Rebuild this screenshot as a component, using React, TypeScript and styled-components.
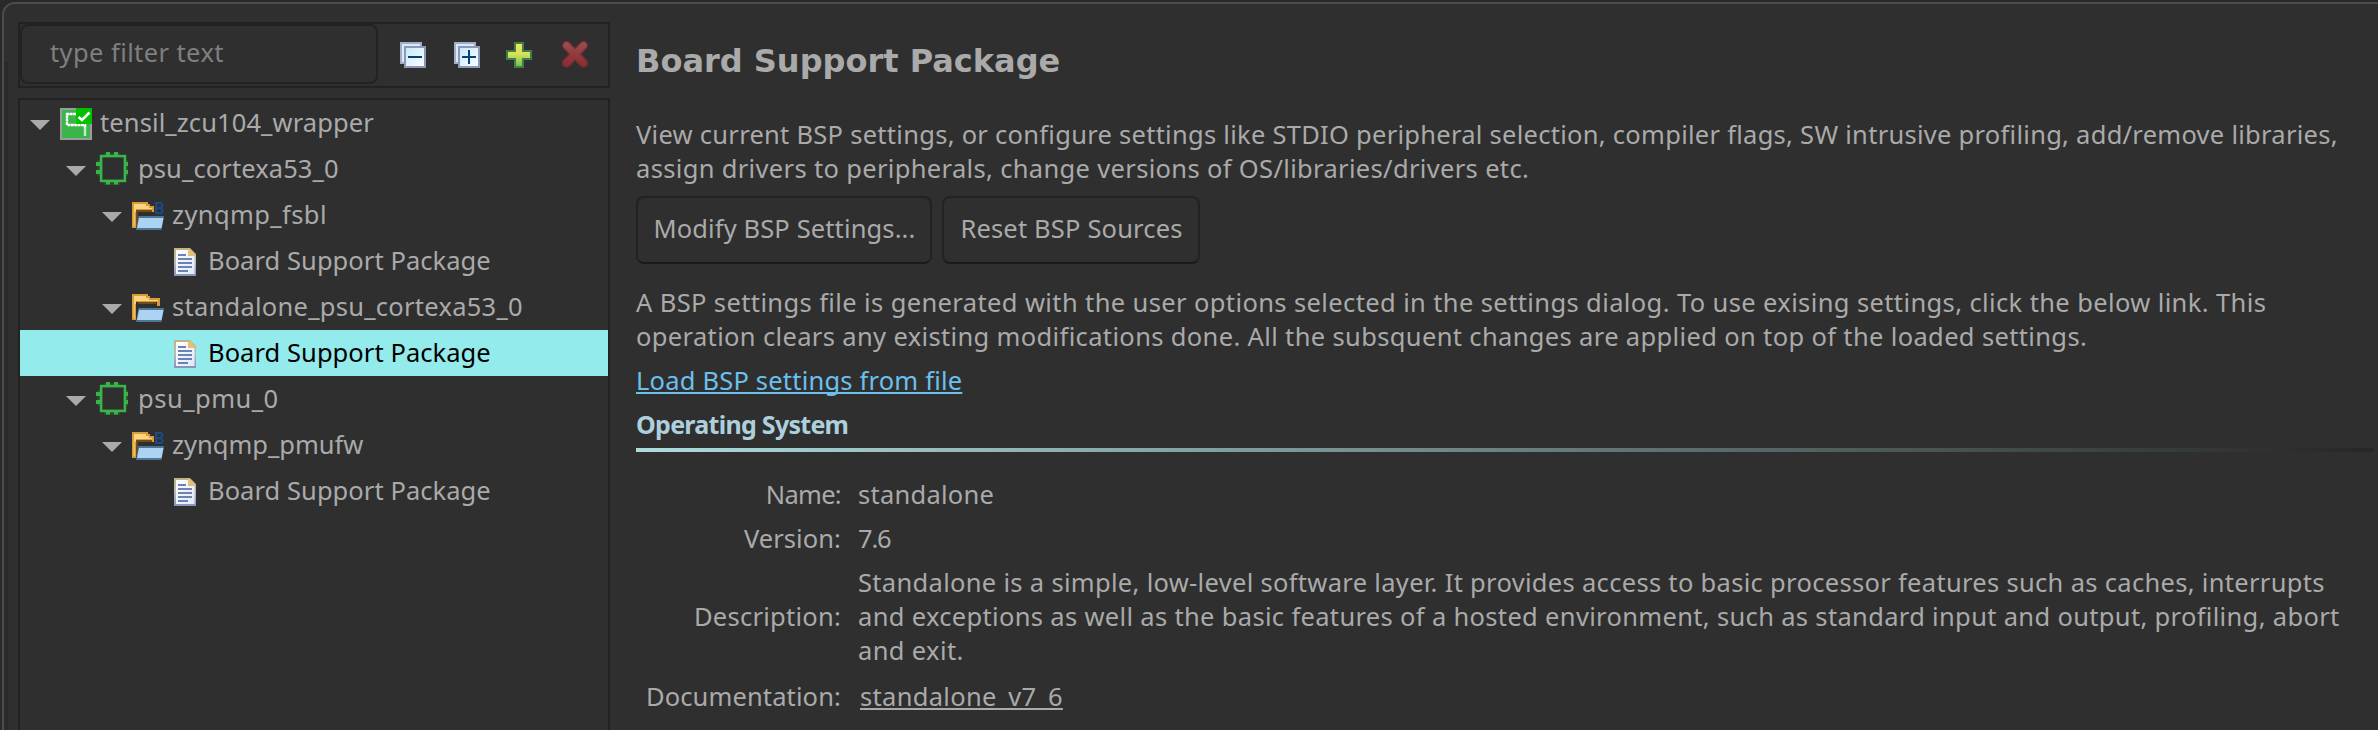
import React from "react";
import styled, { createGlobalStyle, css } from "styled-components";

const GlobalStyle = createGlobalStyle`
  *, *::before, *::after { box-sizing: border-box; }
  html, body { margin: 0; padding: 0; background: #292929; overflow: hidden; }
  body {
    font-family: "Noto Sans", "Open Sans", sans-serif;
    font-size: 25.5px;
    line-height: 34px;
    color: #aaaaaa;
  }
`;

const Frame = styled.div`
  display: flex;
  height: 728px;
  margin: 2px 0 0 2px;
  border-top: 2px solid #4b4b50;
  border-left: 2px solid #4b4b50;
  border-top-left-radius: 13px;
  background: #2f2f2f;
  overflow: hidden;
`;

const Sash = styled.div`
  flex: none;
  width: 4px;
  margin-top: 58px;
  background: #2a2a2a;
`;

const Sidebar = styled.aside`
  display: flex;
  flex-direction: column;
  flex: none;
  width: 592px;
  margin: 18px 0 0 10px;
  gap: 10px;
`;

const Toolbar = styled.div`
  display: flex;
  align-items: flex-start;
  height: 66px;
  border: 2px solid #222222;
`;

const FilterBox = styled.div`
  display: flex;
  align-items: center;
  width: 358px;
  height: 60px;
  padding: 0 0 4px 28px;
  border: 2px solid #222222;
  border-radius: 8px;
  color: #7f7f7f;
  letter-spacing: 0.41px;
`;

const Tools = styled.div`
  display: flex;
  margin: 18px 0 0 22px;
`;

const ToolButton = styled.span<{ $gap: number }>`
  display: flex;
  margin-right: ${(p) => p.$gap}px;
  svg { display: block; overflow: visible; }
`;

const Tree = styled.div`
  flex: 1;
  border: 2px solid #222222;
  border-bottom: 0;
`;

const TreeRow = styled.div<{ $depth: number; $selected?: boolean }>`
  display: flex;
  height: 46px;
  padding-left: ${(p) => 10 + p.$depth * 36}px;
  ${(p) =>
    p.$selected &&
    css`
      background: #94ebeb;
      color: #000000;
    `}
`;

const Twisty = styled.span`
  flex: none;
  width: 20px;
  margin: 20px 10px 0 0;
  svg { display: block; }
`;

const NodeIcon = styled.span<{ $top: number }>`
  flex: none;
  width: 32px;
  margin-top: ${(p) => p.$top}px;
  svg { display: block; overflow: visible; }
`;

const NodeLabel = styled.span<{ $track: number; $pad: number }>`
  padding: 5px 0 0 ${(p) => p.$pad}px;
  letter-spacing: ${(p) => p.$track}px;
  white-space: nowrap;
`;

const Content = styled.main`
  flex: 1;
  padding: 36px 4px 0 0;
  margin-left: 26px;
`;

const Title = styled.h1`
  margin: 0;
  height: 77px;
  font: bold 32px/42px "DejaVu Sans", sans-serif;
`;

const Paragraph = styled.p<{ $gap: number }>`
  margin: 0 0 ${(p) => p.$gap}px;
`;

const Line = styled.span<{ $track: number }>`
  display: block;
  white-space: nowrap;
  letter-spacing: ${(p) => p.$track}px;
`;

const Buttons = styled.div`
  display: flex;
  gap: 10px;
  margin-bottom: 21px;
`;

const Button = styled.button<{ $width: number; $track: number }>`
  width: ${(p) => p.$width}px;
  height: 68px;
  padding: 0 0 5px 1px;
  border: 2px solid #222222;
  border-bottom-color: #1a1a1a;
  border-radius: 8px;
  background: #2f2f2f;
  color: inherit;
  font: inherit;
  letter-spacing: ${(p) => p.$track}px;
  white-space: nowrap;
`;

const LoadLink = styled.a`
  display: block;
  width: fit-content;
  margin-bottom: 10px;
  color: #6cc0ee;
  letter-spacing: 0.2px;
  text-decoration: underline;
  text-decoration-thickness: 2px;
  text-decoration-skip-ink: none;
  text-underline-offset: 2px;
`;

const SectionTitle = styled.h2`
  margin: 0;
  height: 41px;
  font-size: 25px;
  line-height: 34px;
  letter-spacing: -0.72px;
  color: #add0dc;
`;

const Rule = styled.div`
  height: 4px;
  background: linear-gradient(to right, #b0dcdc, #262626);
`;

const Details = styled.dl`
  display: grid;
  grid-template-columns: 205px 1fr;
  column-gap: 17px;
  row-gap: 10px;
  align-items: center;
  margin: 25px 0 0;
`;

const Term = styled.dt<{ $track: number }>`
  text-align: right;
  letter-spacing: ${(p) => p.$track}px;

  &:last-of-type {
    padding-top: 2px;
  }
`;

const Value = styled.dd`
  margin: 0;

  &:last-of-type {
    padding-top: 2px;
  }
`;

const DocLink = styled.a`
  margin-left: 2px;
  letter-spacing: 0.3px;
  text-decoration: underline;
  text-decoration-thickness: 2px;
  text-decoration-skip-ink: none;
  text-underline-offset: 2px;
`;

const Arrow = () => (
  <svg width="20" height="10" viewBox="0 0 20 10">
    <path d="M0 0H20L10 10Z" fill="#aaaaaa" />
  </svg>
);

const BoardIcon = () => (
  <svg width="32" height="32" viewBox="0 0 32 32">
    <rect width="32" height="32" fill="#9c9c9c" />
    <rect x="2" y="2" width="28" height="28" fill="#39b54a" />
    <path d="M16 6H7V17H25V20" fill="none" stroke="#fff" strokeWidth="2.400" strokeDasharray="3 .4" />
    <path d="M25 19V28" stroke="#c4ecca" strokeWidth="2.400" />
    <rect x="16" width="16" height="16" fill="#00c000" />
    <path d="M18.500 9L22 12L29.500 4.500" fill="none" stroke="#fff" strokeWidth="2.600" />
  </svg>
);

const ChipIcon = () => (
  <svg width="33" height="33" viewBox="0 0 33 33">
    <path d="M8 1H24V4H8ZM8 29H24V33H8ZM1 8H4V24H1ZM29 8H32V24H29Z" fill="#2f5e36" opacity=".55" />
    <rect x="6.500" y="5.500" width="21" height="22" fill="none" stroke="#2e5234" strokeWidth="1" />
    <path
      d="M10 0H14V4H10ZM18 0H22V4H18ZM10 28H14V32.500H10ZM18 28H22V32.500H18ZM0 10H4V14H0ZM0 18H4V22H0ZM28 10H32V14H28ZM28 18H32V22H28Z"
      fill="#39b54a"
    />
    <rect x="5" y="4" width="24" height="25" fill="none" stroke="#39b54a" strokeWidth="2.400" />
  </svg>
);

const FolderIcon = ({ bsp }: { bsp?: boolean }) => (
  <svg width="32" height="32" viewBox="0 0 32 32">
    <path
      d={bsp ? "M0 2H16V4H18V6H22V12H4V28H0Z" : "M0 2H16V4H18V6H28V14H25V10H4V28H0Z"}
      fill="#d99c36"
    />
    <path
      d={bsp ? "M2 4H14V6H17V8H20V9H4V12H2Z" : "M2 4H14V6H17V8H26V9H4V12H2Z"}
      fill="#f9d583"
    />
    <path d={bsp ? "M4 10H20V12H6V26H4Z" : "M6 10H24V12H6Z"} fill="#6b4c1c" />
    <path d="M1.500 10H3V26H1.500Z" fill="#f0c266" />
    <path d="M6.500 16H32L29.500 30H4Z" fill="#4d7595" />
    <path d="M7 18H31.500L29.500 28H5Z" fill="#acd4f2" />
    {bsp && (
      <text x="22.500" y="14" fill="#1a4c86" fontFamily="Liberation Sans, sans-serif" fontWeight="bold" fontSize="16" textLength="10" lengthAdjust="spacingAndGlyphs">
        B
      </text>
    )}
  </svg>
);

const DocumentIcon = () => (
  <svg width="32" height="32" viewBox="0 0 32 32">
    <defs>
      <linearGradient id="docEdge" x1="0" y1="0" x2="0" y2="1">
        <stop offset="0" stopColor="#c2b27c" />
        <stop offset=".5" stopColor="#b9bcb8" />
        <stop offset="1" stopColor="#8494b8" />
      </linearGradient>
      <linearGradient id="docFace" x1="0" y1="0" x2="1" y2="1">
        <stop offset="0" stopColor="#ffffff" />
        <stop offset="1" stopColor="#dfe8fa" />
      </linearGradient>
    </defs>
    <path d="M6 2H22L28 8V30H6Z" fill="url(#docEdge)" />
    <path d="M8 4H20V10H26.500V28H8Z" fill="url(#docFace)" />
    <path d="M20 3H22L27 8.500V10H20Z" fill="#e3c078" />
    <path d="M10 8H18V10H10ZM10 12H24V14H10ZM10 16H24V18H10ZM10 20H24V22H10ZM10 24H20V26H10Z" fill="#6c82b4" />
  </svg>
);

const StackIcon = ({ plus }: { plus?: boolean }) => (
  <svg width="26" height="26" viewBox="0 0 26 26">
    <defs>
      <linearGradient id="pane" x1="0" y1="0" x2="1" y2="1">
        <stop offset="0" stopColor="#c4e8fa" />
        <stop offset="1" stopColor="#ffffff" />
      </linearGradient>
    </defs>
    <rect x="1" y="1" width="20" height="20" fill="#d3edfa" stroke="#a3adc6" strokeWidth="2" />
    <rect x="5" y="5" width="20" height="20" fill="url(#pane)" stroke="#8c98b6" strokeWidth="2" />
    <path d={plus ? "M8 14H22V16H8ZM14 8H16V22H14Z" : "M8 14H22V16H8Z"} fill="#04427c" />
  </svg>
);

const AddIcon = () => (
  <svg width="26" height="26" viewBox="0 0 26 26">
    <defs>
      <linearGradient id="add" x1="0" y1="0" x2="0" y2="1">
        <stop offset="0" stopColor="#f2e35a" />
        <stop offset=".45" stopColor="#d8e25a" />
        <stop offset="1" stopColor="#6cc04a" />
      </linearGradient>
    </defs>
    <path d="M9 1H17V9H25V17H17V25H9V17H1V9H9Z" fill="url(#add)" stroke="#3f7d4c" strokeWidth="2" />
  </svg>
);

const RemoveIcon = () => (
  <svg width="26" height="26" viewBox="0 0 26 26">
    <defs>
      <linearGradient id="remove" gradientUnits="userSpaceOnUse" x1="0" y1="0" x2="0" y2="26">
        <stop offset="0" stopColor="#965252" />
        <stop offset=".5" stopColor="#92393c" />
        <stop offset="1" stopColor="#8a2a30" />
      </linearGradient>
    </defs>
    <g fill="none" strokeLinecap="round" strokeLinejoin="round">
      <path d="M4.500 3.500L21.500 21M21.500 3.500L4.500 21" stroke="#7b2c30" strokeWidth="9" />
      <path d="M4.500 3.500L21.500 21M21.500 3.500L4.500 21" stroke="url(#remove)" strokeWidth="6.500" />
    </g>
  </svg>
);

type Kind = "board" | "chip" | "bsp" | "folder" | "doc";

const icons: Record<Kind, { top: number; pad: number; node: React.ReactNode }> = {
  board: { top: 8, pad: 8, node: <BoardIcon /> },
  chip: { top: 6, pad: 10, node: <ChipIcon /> },
  bsp: { top: 8, pad: 8, node: <FolderIcon bsp /> },
  folder: { top: 8, pad: 8, node: <FolderIcon /> },
  doc: { top: 8, pad: 8, node: <DocumentIcon /> },
};

const nodes: { label: string; depth: number; kind: Kind; track: number; selected?: boolean }[] = [
  { label: "tensil_zcu104_wrapper", depth: 0, kind: "board", track: 0.1 },
  { label: "psu_cortexa53_0", depth: 1, kind: "chip", track: 0.1 },
  { label: "zynqmp_fsbl", depth: 2, kind: "bsp", track: 0.4 },
  { label: "Board Support Package", depth: 3, kind: "doc", track: 0.06 },
  { label: "standalone_psu_cortexa53_0", depth: 2, kind: "folder", track: 0.26 },
  { label: "Board Support Package", depth: 3, kind: "doc", track: 0.06, selected: true },
  { label: "psu_pmu_0", depth: 1, kind: "chip", track: 0.5 },
  { label: "zynqmp_pmufw", depth: 2, kind: "bsp", track: 0 },
  { label: "Board Support Package", depth: 3, kind: "doc", track: 0.06 },
];

export default function App() {
  return (
    <>
      <GlobalStyle />
      <Frame>
        <Sash />
        <Sidebar>
          <Toolbar>
            <FilterBox>type filter text</FilterBox>
            <Tools>
              <ToolButton $gap={28}><StackIcon /></ToolButton>
              <ToolButton $gap={26}><StackIcon plus /></ToolButton>
              <ToolButton $gap={30}><AddIcon /></ToolButton>
              <ToolButton $gap={0}><RemoveIcon /></ToolButton>
            </Tools>
          </Toolbar>
          <Tree>
            {nodes.map((n, i) => (
              <TreeRow key={i} $depth={n.depth} $selected={n.selected}>
                <Twisty>{n.kind !== "doc" && <Arrow />}</Twisty>
                <NodeIcon $top={icons[n.kind].top}>{icons[n.kind].node}</NodeIcon>
                <NodeLabel $track={n.track} $pad={icons[n.kind].pad}>{n.label}</NodeLabel>
              </TreeRow>
            ))}
          </Tree>
        </Sidebar>
        <Content>
          <Title>Board Support Package</Title>
          <Paragraph $gap={11}>
            <Line $track={0.272}>View current BSP settings, or configure settings like STDIO peripheral selection, compiler flags, SW intrusive profiling, add/remove libraries,</Line>
            <Line $track={0.336}>assign drivers to peripherals, change versions of OS/libraries/drivers etc.</Line>
          </Paragraph>
          <Buttons>
            <Button $width={296} $track={0.12}>Modify BSP Settings...</Button>
            <Button $width={258} $track={0.17}>Reset BSP Sources</Button>
          </Buttons>
          <Paragraph $gap={10}>
            <Line $track={0.384}>A BSP settings file is generated with the user options selected in the settings dialog. To use exising settings, click the below link. This</Line>
            <Line $track={0.353}>operation clears any existing modifications done. All the subsquent changes are applied on top of the loaded settings.</Line>
          </Paragraph>
          <LoadLink>Load BSP settings from file</LoadLink>
          <SectionTitle>Operating System</SectionTitle>
          <Rule />
          <Details>
            <Term $track={-0.7}>Name:</Term>
            <Value>
              <Line $track={0.25}>standalone</Line>
            </Value>
            <Term $track={0.07}>Version:</Term>
            <Value>
              <Line $track={-1.2}>7.6</Line>
            </Value>
            <Term $track={0.25}>Description:</Term>
            <Value>
              <Line $track={0.312}>Standalone is a simple, low-level software layer. It provides access to basic processor features such as caches, interrupts</Line>
              <Line $track={0.331}>and exceptions as well as the basic features of a hosted environment, such as standard input and output, profiling, abort</Line>
              <Line $track={0.37}>and exit.</Line>
            </Value>
            <Term $track={0.12}>Documentation:</Term>
            <Value>
              <DocLink>standalone_v7_6</DocLink>
            </Value>
          </Details>
        </Content>
      </Frame>
    </>
  );
}
